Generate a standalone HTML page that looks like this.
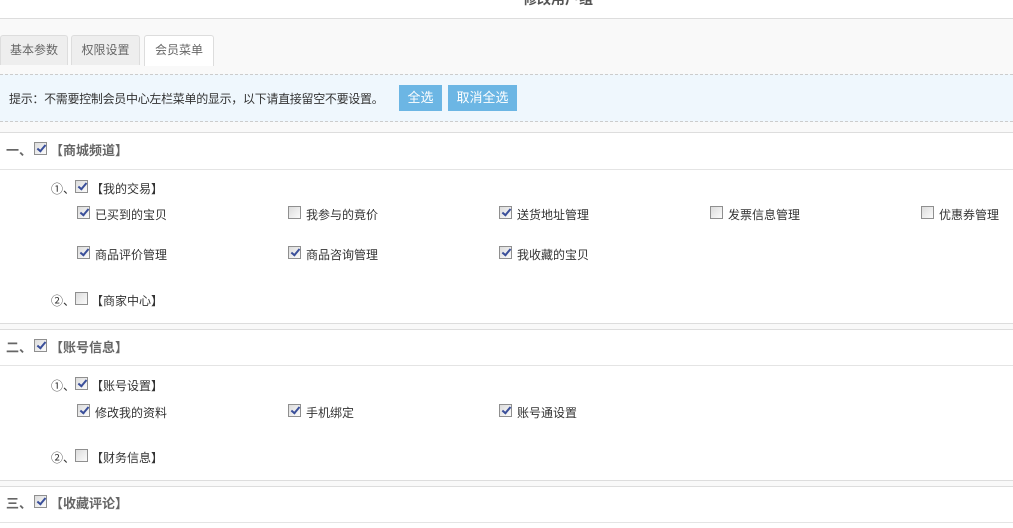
<!DOCTYPE html>
<html><head><meta charset="utf-8"><style>
*{margin:0;padding:0;box-sizing:border-box}
body{width:1013px;height:528px;overflow:hidden;background:#fff;font-family:"Liberation Sans","Noto Sans CJK SC",sans-serif;font-size:12px;color:#333;position:relative}
.a{position:absolute;white-space:nowrap}
.cb{position:absolute;width:13px;height:13px;border:1px solid #8f8f8f;background:linear-gradient(135deg,#dcdcdc,#fbfbfb)}
.cb.c::after{content:"";position:absolute;left:4px;top:0px;width:3px;height:7px;border:solid #3a4f9a;border-width:0 2px 2px 0;transform:rotate(40deg)}
.hl{position:absolute;left:0;width:1013px;height:1px;background:#e4e4e4}
.tab{position:absolute;top:35px;height:30px;border:1px solid #ddd;border-bottom:none;border-radius:3px 3px 0 0;background:#eee;color:#666;font-size:12px;line-height:28px;text-align:center}
.h{font-weight:bold;color:#666;font-size:13px}
.btn{position:absolute;top:85px;height:26px;background:#6cb6e4;color:#fff;font-size:13px;line-height:26px;text-align:center}
</style></head><body>
<div class="a" style="left:523px;top:-11px;font-size:14px;font-weight:bold;color:#555">修改用户组</div>
<div class="hl" style="top:18px;background:#ddd"></div>
<div style="position:absolute;left:0;top:19px;width:1013px;height:113px;background:#f9f9f9"></div>
<div class="tab" style="left:0;width:68px">基本参数</div>
<div class="tab" style="left:71px;width:69px">权限设置</div>
<div class="tab" style="left:144px;width:70px;background:#fff;height:31px">会员菜单</div>
<div style="position:absolute;left:0;top:74px;width:1013px;height:48px;background:#eff7fd;border-top:1px dashed #ccc;border-bottom:1px dashed #ccc"></div>
<div class="a" style="left:9px;top:90px;font-size:12px;color:#333;letter-spacing:-0.3px">提示：不需要控制会员中心左栏菜单的显示，以下请直接留空不要设置。</div>
<div class="btn" style="left:399px;width:43px">全选</div>
<div class="btn" style="left:448px;width:69px">取消全选</div>
<div class="hl" style="top:132px;background:#ddd"></div>

<div class="a h" style="left:6px;top:140px">一、</div><div class="cb c" style="left:34px;top:142px"></div><div class="a h" style="left:50px;top:140px">【商城频道】</div>
<div class="hl" style="top:169px"></div>
<div class="a" style="left:51px;top:180px">①、</div><div class="cb c" style="left:75px;top:180px"></div><div class="a" style="left:91px;top:180px">【我的交易】</div>
<div class="cb c" style="left:77px;top:206px"></div><div class="a" style="left:95px;top:206px">已买到的宝贝</div>
<div class="cb" style="left:288px;top:206px"></div><div class="a" style="left:306px;top:206px">我参与的竟价</div>
<div class="cb c" style="left:499px;top:206px"></div><div class="a" style="left:517px;top:206px">送货地址管理</div>
<div class="cb" style="left:710px;top:206px"></div><div class="a" style="left:728px;top:206px">发票信息管理</div>
<div class="cb" style="left:921px;top:206px"></div><div class="a" style="left:939px;top:206px">优惠券管理</div>
<div class="cb c" style="left:77px;top:246px"></div><div class="a" style="left:95px;top:246px">商品评价管理</div>
<div class="cb c" style="left:288px;top:246px"></div><div class="a" style="left:306px;top:246px">商品咨询管理</div>
<div class="cb c" style="left:499px;top:246px"></div><div class="a" style="left:517px;top:246px">我收藏的宝贝</div>
<div class="a" style="left:51px;top:292px">②、</div><div class="cb" style="left:75px;top:292px"></div><div class="a" style="left:91px;top:292px">【商家中心】</div>
<div class="hl" style="top:323px;background:#ddd"></div>
<div style="position:absolute;left:0;top:324px;width:1013px;height:5px;background:#f9f9f9"></div>
<div class="hl" style="top:329px;background:#ddd"></div>

<div class="a h" style="left:6px;top:337px">二、</div><div class="cb c" style="left:34px;top:339px"></div><div class="a h" style="left:50px;top:337px">【账号信息】</div>
<div class="hl" style="top:365px"></div>
<div class="a" style="left:51px;top:377px">①、</div><div class="cb c" style="left:75px;top:377px"></div><div class="a" style="left:91px;top:377px">【账号设置】</div>
<div class="cb c" style="left:77px;top:404px"></div><div class="a" style="left:95px;top:404px">修改我的资料</div>
<div class="cb c" style="left:288px;top:404px"></div><div class="a" style="left:306px;top:404px">手机绑定</div>
<div class="cb c" style="left:499px;top:404px"></div><div class="a" style="left:517px;top:404px">账号通设置</div>
<div class="a" style="left:51px;top:449px">②、</div><div class="cb" style="left:75px;top:449px"></div><div class="a" style="left:91px;top:449px">【财务信息】</div>
<div class="hl" style="top:480px;background:#ddd"></div>
<div style="position:absolute;left:0;top:481px;width:1013px;height:5px;background:#f9f9f9"></div>
<div class="hl" style="top:486px;background:#ddd"></div>

<div class="a h" style="left:6px;top:493px">三、</div><div class="cb c" style="left:34px;top:495px"></div><div class="a h" style="left:50px;top:493px">【收藏评论】</div>
<div class="hl" style="top:522px"></div>
</body></html>
